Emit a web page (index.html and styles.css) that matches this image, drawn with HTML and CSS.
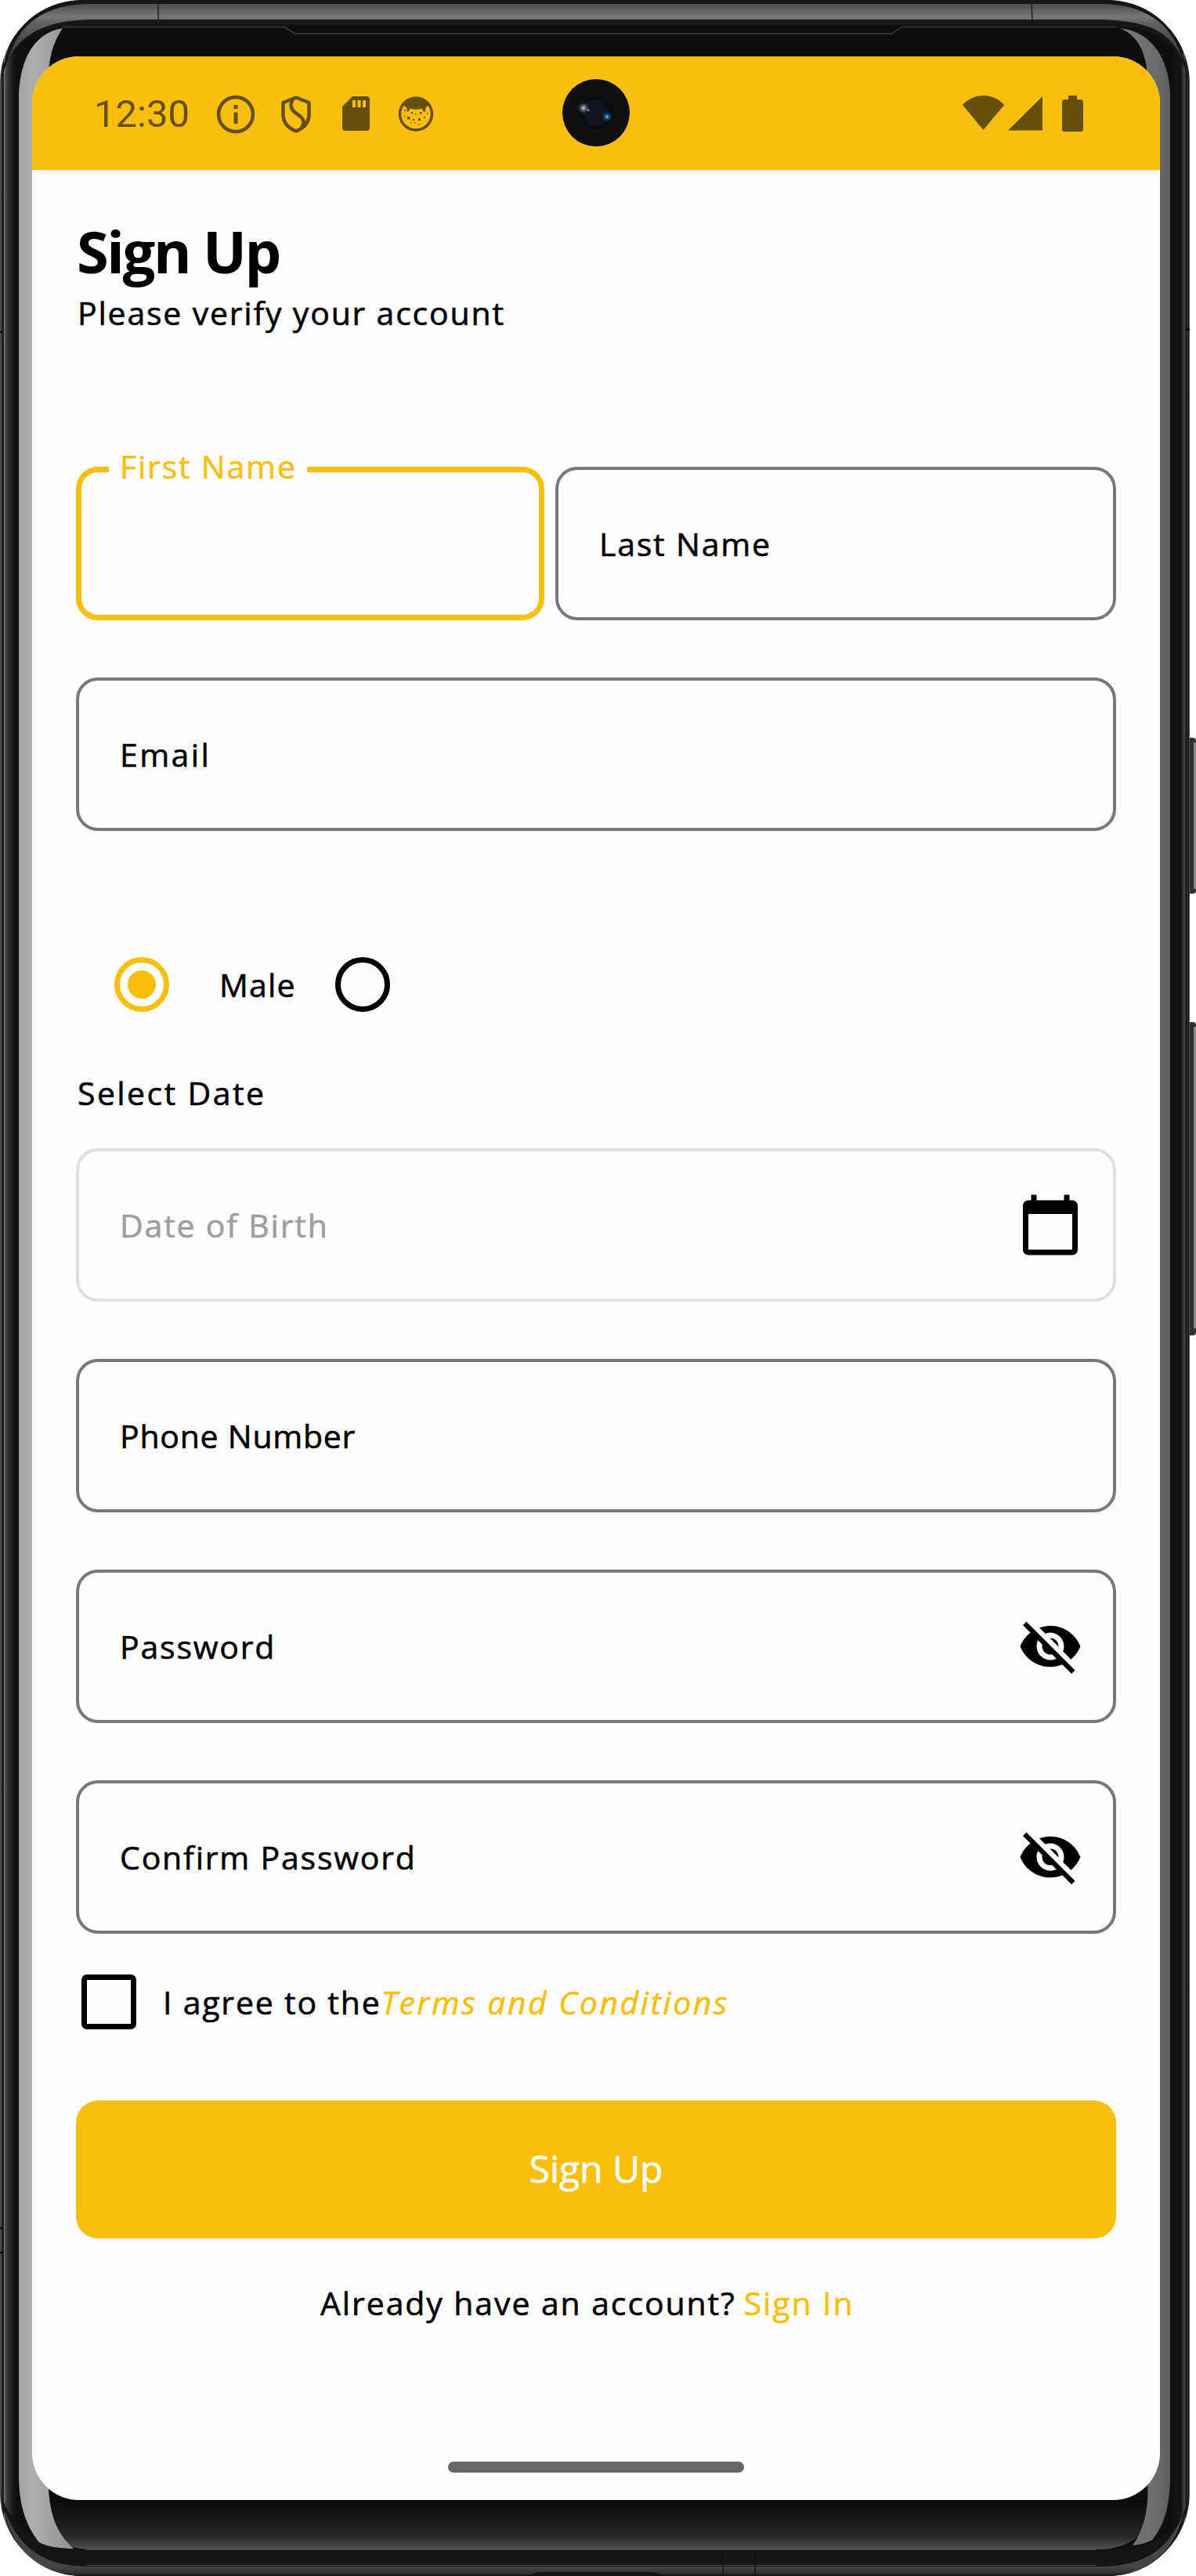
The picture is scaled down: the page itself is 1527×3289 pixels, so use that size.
FILE: index.html
```html
<!DOCTYPE html>
<html lang="en">
<head>
<meta charset="utf-8">
<title>Sign Up</title>
<link rel="stylesheet" href="styles.css">
</head>
<body>
<div class="phone">
  <svg class="frame" viewBox="0 0 1527 3289" aria-hidden="true">
    <defs>
      <linearGradient id="side" gradientUnits="userSpaceOnUse" x1="0" y1="0" x2="1519" y2="0">
        <stop offset="0" stop-color="#555"/><stop offset=".0018" stop-color="#2a2a2a"/><stop offset=".0028" stop-color="#0a0a0a"/>
        <stop offset=".0036" stop-color="#777"/><stop offset=".0046" stop-color="#4a4a4a"/><stop offset=".0075" stop-color="#2c2c2c"/><stop offset=".0125" stop-color="#101010"/>
        <stop offset=".985" stop-color="#0f0f0f"/><stop offset=".993" stop-color="#161616"/><stop offset=".9955" stop-color="#4c4c4c"/><stop offset=".997" stop-color="#141414"/>
        <stop offset=".9982" stop-color="#333"/><stop offset=".9992" stop-color="#080808"/><stop offset="1" stop-color="#888"/>
      </linearGradient>
      <linearGradient id="topBand" x1="0" y1="5" x2="0" y2="80" gradientUnits="userSpaceOnUse">
        <stop offset="0" stop-color="#4c4c4c"/><stop offset=".22" stop-color="#777"/><stop offset=".32" stop-color="#626262"/><stop offset="1" stop-color="#2b2b2b"/>
      </linearGradient>
      <linearGradient id="chin" x1="0" y1="3192" x2="0" y2="3255" gradientUnits="userSpaceOnUse">
        <stop offset="0" stop-color="#0d0d0d"/><stop offset=".35" stop-color="#151515"/><stop offset=".75" stop-color="#292929"/><stop offset="1" stop-color="#515151"/>
      </linearGradient>
      <linearGradient id="lip" x1="0" y1="3277" x2="0" y2="3289" gradientUnits="userSpaceOnUse">
        <stop offset="0" stop-color="#454545"/><stop offset=".75" stop-color="#303030"/><stop offset="1" stop-color="#0c0c0c"/>
      </linearGradient>
      <linearGradient id="glintL" x1="24" y1="0" x2="90" y2="0" gradientUnits="userSpaceOnUse">
        <stop offset="0" stop-color="#a4a4a4"/><stop offset=".3" stop-color="#adadad"/><stop offset="1" stop-color="#929292"/>
      </linearGradient>
      <linearGradient id="glintR" x1="1440" y1="0" x2="1494" y2="0" gradientUnits="userSpaceOnUse">
        <stop offset="0" stop-color="#777"/><stop offset=".7" stop-color="#6b6b6b"/><stop offset="1" stop-color="#5d5d5d"/>
      </linearGradient>
    </defs>
    <rect x="1515" y="942" width="12" height="199" rx="4" fill="#303030"/>
    <rect x="1524" y="948" width="3" height="187" fill="#8a8a8a"/>
    <rect x="1515" y="1305" width="12" height="400" rx="4" fill="#303030"/>
    <rect x="1524" y="1311" width="3" height="385" fill="#8a8a8a"/>
    <rect width="1519" height="3289" rx="106" fill="url(#side)"/>
    <path d="M2 105C6 40 48 1 106 0H1413C1471 1 1513 40 1517 105C1508 50 1470 33 1410 33H110C50 33 10 50 2 105z" fill="#161616"/>
    <path d="M9 80C22 30 58 6 112 5H1408C1462 6 1498 30 1511 80C1496 38 1462 27 1408 25H112C60 27 25 42 9 80z" fill="url(#topBand)"/>
    <path d="M202 5V29M1317 4L1318 26" stroke="#222" stroke-width="1.5"/>
    <path d="M1 3184C8 3250 50 3289 106 3289H1413C1470 3289 1512 3250 1518 3184C1510 3236 1470 3255 1410 3255H110C50 3255 16 3230 1 3184z" fill="#151515"/>
    <path d="M6 3205C24 3256 60 3276 110 3277H1408C1460 3276 1494 3256 1512 3205C1500 3262 1462 3288 1413 3289H106C56 3288 16 3260 6 3205z" fill="url(#lip)"/>
    <rect x="23" y="32" width="1472" height="3224" rx="88" fill="#0e0e0e"/>
    <path d="M41 3192H1478C1474 3232 1440 3255 1405 3255H112C74 3253 46 3230 41 3192z" fill="url(#chin)"/>
    <path d="M110 3255.500H1400M110 3275.500H1400" stroke="#4c4c4c" stroke-width="1"/>
    <path d="M24 3160V120C26 78 42 42 80 36C70 51 62 70 62 100V3178C64 3210 72 3235 94 3254C80 3254 60 3252 50 3246C34 3226 24 3200 24 3160z" fill="url(#glintL)"/>
    <path d="M1494 3160V120C1493 78 1472 40 1430 36C1452 45 1464 66 1465 100V3168C1467 3200 1462 3228 1446 3250C1456 3249 1462 3247 1471 3243C1488 3222 1494 3196 1494 3160z" fill="url(#glintR)"/>
    <path d="M80 34.500H363L376 43H1139L1151 34.500H1425" fill="none" stroke="#3a3a3a" stroke-width="1.500"/>
    <path d="M0 424H4M0 2845H4M0 2876H4M1513 421H1519" stroke="#050505" stroke-width="2"/>
    <path d="M923 3256V3288M964 3256V3288" stroke="#080808" stroke-width="1"/>
    <path d="M675 3289Q683 3284 695 3284H828Q840 3284 848 3289z" fill="#141414"/>
  </svg>

  <main class="screen">
    <header class="status">
      <span class="clock">12:30</span>
      <svg class="status-left" viewBox="275 121 282 50" width="282" height="50" fill="#664f09">
        <circle cx="301" cy="146" r="22" fill="none" stroke="#664f09" stroke-width="4.500"/>
        <path d="M298.500 134h5v5h-5zM298.500 143.500h5v14.500h-5z"/>
        <path d="M378 124.500L394.500 131V146C394.500 156 388 163.500 378 167.500C368 163.500 361.500 156 361.500 146V131z" fill="none" stroke="#664f09" stroke-width="4.500" stroke-linejoin="round"/>
        <path d="M374 127C370 133 371 139 376 143L384 149C388 153 389 158 385 163" fill="none" stroke="#664f09" stroke-width="4.500"/>
        <path fill-rule="evenodd" d="M450 123H468Q472 123 472 127V163Q472 167 468 167H441Q437 167 437 163V136zM450 128V137H454V128zM456.500 128V137H460.500V128zM463 128V137H467V128z"/>
        <circle cx="531" cy="145.500" r="20.500" fill="none" stroke="#664f09" stroke-width="3.500"/>
        <path d="M514 134Q520 124 531 124Q542 124 548 134L545 136L544 137L542.500 143L540 142L539 138.500Q531 141 523.500 138.500L522 142L520 143L519 137L517 136z"/>
        <path d="M516 140h2v2h-2zM525 143h2v2h-2zM516 148h1.500v1.500h-1.500zM520 149h3.500v3.500h-3.500zM527 152h2v2h-2zM530 145h1.500v1.500h-1.500zM536 143h2.500v2.500h-2.500zM534 151h3v3h-3zM541 149h2v2h-2zM545 144h1.500v1.500h-1.500zM524 156h1.500v1.500h-1.500zM529 156h1.500v1.500h-1.500zM534 158h1.500v1.500h-1.500z"/>
      </svg>
      <svg class="status-right" viewBox="1229 121 155 50" width="155" height="50" fill="#664f09">
        <path d="M1229 134C1243 118 1268 118 1282 134L1255.500 166zM1331 123V166.500H1287z"/>
        <path d="M1364 122H1375V127H1380Q1383 127 1383 130V165Q1383 168 1380 168H1359Q1356 168 1356 165V130Q1356 127 1359 127H1364z"/>
      </svg>
    </header>

    <form class="content">
      <h1 class="title">Sign Up</h1>
      <p class="subtitle">Please verify your account</p>
      <div class="names">
        <div class="field focused"><span class="floating">First Name</span></div>
        <div class="field">Last Name</div>
      </div>
      <div class="field email">Email</div>
      <div class="gender">
        <i class="radio checked"></i><span class="male">Male</span><i class="radio"></i>
      </div>
      <p class="select-date">Select Date</p>
      <div class="fields">
        <div class="field disabled"><span>Date of Birth</span>
          <svg class="icon" viewBox="0 0 24 24"><path d="M20 3h-1V1h-2v2H7V1H5v2H4c-1.100 0-2 .9-2 2v16c0 1.100.9 2 2 2h16c1.100 0 2-.9 2-2V5c0-1.100-.9-2-2-2zm0 18H4V8h16v13z"/></svg>
        </div>
        <div class="field phone-number">Phone Number</div>
        <div class="field"><span>Password</span>
          <svg class="icon" viewBox="0 0 24 24"><path d="M12 7c2.760 0 5 2.240 5 5 0 .65-.13 1.260-.36 1.830l2.920 2.920c1.510-1.260 2.700-2.890 3.430-4.750-1.730-4.390-6-7.500-11-7.500-1.400 0-2.740.25-3.980.7l2.160 2.160C10.740 7.130 11.350 7 12 7zM2 4.270l2.280 2.280.46.46C3.080 8.300 1.780 10.020 1 12c1.730 4.390 6 7.500 11 7.500 1.550 0 3.030-.3 4.380-.84l.42.42L19.730 22 21 20.730 3.270 3 2 4.270zM7.530 9.800l1.550 1.550c-.05.21-.08.43-.08.65 0 1.660 1.340 3 3 3 .22 0 .44-.03.65-.08l1.550 1.550c-.67.33-1.410.53-2.200.53-2.760 0-5-2.240-5-5 0-.79.2-1.530.53-2.200zm4.310-.78l3.150 3.150.02-.16c0-1.660-1.340-3-3-3l-.17.01z"/></svg>
        </div>
        <div class="field"><span>Confirm Password</span>
          <svg class="icon" viewBox="0 0 24 24"><path d="M12 7c2.760 0 5 2.240 5 5 0 .65-.13 1.260-.36 1.830l2.920 2.920c1.510-1.260 2.700-2.890 3.430-4.750-1.730-4.390-6-7.500-11-7.500-1.400 0-2.740.25-3.980.7l2.160 2.160C10.740 7.130 11.350 7 12 7zM2 4.270l2.280 2.280.46.46C3.080 8.300 1.780 10.020 1 12c1.730 4.390 6 7.500 11 7.500 1.550 0 3.030-.3 4.380-.84l.42.42L19.730 22 21 20.730 3.270 3 2 4.270zM7.530 9.800l1.550 1.550c-.05.21-.08.43-.08.65 0 1.660 1.340 3 3 3 .22 0 .44-.03.65-.08l1.550 1.550c-.67.33-1.410.53-2.200.53-2.760 0-5-2.240-5-5 0-.79.2-1.530.53-2.200zm4.310-.78l3.150 3.150.02-.16c0-1.660-1.340-3-3-3l-.17.01z"/></svg>
        </div>
      </div>
      <div class="terms"><i class="checkbox"></i><span class="agree">I agree to the</span><a class="link">Terms and Conditions</a></div>
      <div class="submit">Sign Up</div>
      <p class="signin"><span>Already have an account?</span><a>Sign In</a></p>
    </form>
    <div class="home"></div>
  </main>

  <svg class="camera" viewBox="0 0 86 86" aria-hidden="true">
    <defs>
      <radialGradient id="lens"><stop offset="0" stop-color="#17131c"/><stop offset=".75" stop-color="#0e1420"/><stop offset="1" stop-color="#07080a"/></radialGradient>
      <radialGradient id="flare"><stop offset="0" stop-color="#dfe7ea"/><stop offset=".35" stop-color="#66727a"/><stop offset="1" stop-color="#66727a" stop-opacity="0"/></radialGradient>
      <radialGradient id="blue"><stop offset="0" stop-color="#9ed6ff"/><stop offset=".3" stop-color="#1c5f9c"/><stop offset="1" stop-color="#0b2d55" stop-opacity="0"/></radialGradient>
    </defs>
    <circle cx="43" cy="43" r="43" fill="#0f1010"/>
    <circle cx="43" cy="43" r="20.500" fill="url(#lens)"/>
    <circle cx="27" cy="37" r="7" fill="url(#flare)"/>
    <circle cx="33" cy="39.500" r="1.500" fill="#b070b0"/>
    <circle cx="57" cy="48" r="7" fill="url(#blue)"/>
  </svg>
</div>
</body>
</html>
```
FILE: styles.css
```css
* { box-sizing: border-box; }
body { margin: 0; background: #fff; font-family: "Open Sans", sans-serif; font-weight: 400; color: #000; }
h1, p { margin: 0; }
.phone { position: relative; width: 1527px; height: 3289px; padding: 72px 0 0 41px; overflow: hidden; }
.frame { position: absolute; inset: 0; width: 1527px; height: 3289px; }
.screen { position: relative; display: flex; flex-direction: column; width: 1440px; height: 3120px; border-radius: 60px; overflow: hidden; background: #fefefe; }
.status { display: flex; align-items: center; height: 145px; padding: 2px 97px 0 79px; background: #f8bf0f; color: #664f09; }
.clock { width: 155px; font: 400 49px/60px Roboto, sans-serif; }
.status-right { margin-left: auto; }
.camera { position: absolute; left: 718px; top: 101px; width: 86px; height: 86px; }
.content { padding: 59px 56px 0; font-size: 41px; line-height: 60px; letter-spacing: 1.8px; -webkit-text-stroke: .6px currentColor; }
.title { padding-left: 1px; font-size: 74px; line-height: 90px; font-weight: 700; letter-spacing: -2.4px; -webkit-text-stroke: 0; }
.subtitle { margin-top: 3px; padding-left: 2px; }
.names { display: grid; grid-template-columns: 598px 716px; gap: 14px; margin: 167px 0 73px; }
.field { position: relative; display: flex; align-items: center; justify-content: space-between; height: 196px; padding: 0 38px 0 52px; border: 4px solid #7a757f; border-radius: 28px; }
.email { letter-spacing: 2.4px; }
.phone-number { letter-spacing: .75px; }
.focused { border: 7px solid #f8bf0f; }
.floating { position: absolute; left: 35px; top: -38px; width: 253px; padding-left: 14px; background: #fefefe; color: #f8bf0f; }
.disabled { border-color: #dfdfdf; color: #9e9e9e; }
.icon { width: 84px; height: 84px; fill: #000; }
.gender { display: flex; align-items: center; height: 168px; margin-top: 112px; padding-left: 49px; }
.radio { width: 70px; height: 70px; border: 7px solid #000; border-radius: 50%; }
.radio.checked { border-color: #f8bf0f; background: radial-gradient(circle, #f8bf0f 17.500px, transparent 18.500px); }
.male { width: 148px; margin-left: 64px; letter-spacing: 1.2px; }
.select-date { margin: 24px 0 41px; padding-left: 2px; letter-spacing: 2.4px; }
.fields { display: grid; gap: 73px; }
.terms { display: flex; align-items: center; height: 70px; margin-top: 52px; padding-left: 7px; }
.checkbox { width: 70px; height: 70px; border: 7px solid #000; border-radius: 7px; }
.agree { margin-left: 34px; }
.link { font-style: italic; color: #f8bf0f; letter-spacing: 2.45px; }
.submit { display: flex; align-items: center; justify-content: center; height: 176px; margin-top: 91px; padding-bottom: 3px; border-radius: 28px; background: #f8bf0f; color: #fff; font-size: 48px; letter-spacing: 0; }
.signin { display: flex; gap: 10px; margin-top: 52px; padding-left: 312px; letter-spacing: 1.9px; }
.signin a { color: #f8bf0f; }
.home { width: 378px; height: 14px; margin: auto auto 35px 531px; border-radius: 7px; background: #666; }
```
